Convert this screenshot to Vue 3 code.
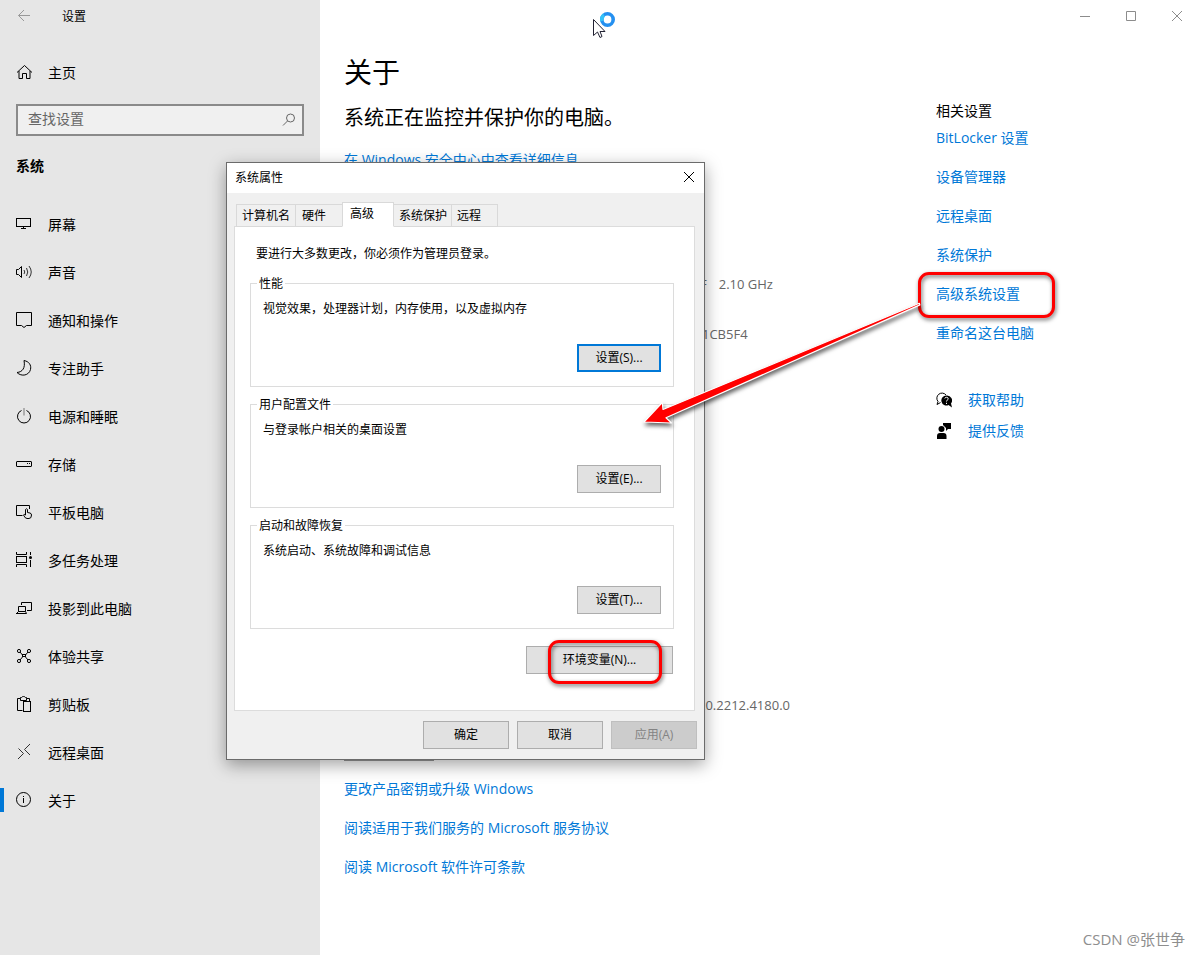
<script setup>
import { ref } from 'vue'

const query = ref('')

const navItems = [
  { id: 'display', label: '屏幕' },
  { id: 'sound', label: '声音' },
  { id: 'notify', label: '通知和操作' },
  { id: 'focus', label: '专注助手' },
  { id: 'power', label: '电源和睡眠' },
  { id: 'storage', label: '存储' },
  { id: 'tablet', label: '平板电脑' },
  { id: 'multitask', label: '多任务处理' },
  { id: 'project', label: '投影到此电脑' },
  { id: 'share', label: '体验共享' },
  { id: 'clipboard', label: '剪贴板' },
  { id: 'remote', label: '远程桌面' },
  { id: 'about', label: '关于' },
]

const tabs = [
  { label: '计算机名', cls: 'tab-name' },
  { label: '硬件', cls: 'tab-hardware' },
  { label: '高级', cls: 'tab-advanced' },
  { label: '系统保护', cls: 'tab-protect' },
  { label: '远程', cls: 'tab-remote' },
]
const activeTab = ref('高级')

const groups = [
  { title: '性能', text: '视觉效果，处理器计划，内存使用，以及虚拟内存', button: '设置(S)...', focused: true },
  { title: '用户配置文件', text: '与登录帐户相关的桌面设置', button: '设置(E)...', focused: false },
  { title: '启动和故障恢复', text: '系统启动、系统故障和调试信息', button: '设置(T)...', focused: false },
]

const related = ['BitLocker 设置', '设备管理器', '远程桌面', '系统保护', '高级系统设置', '重命名这台电脑']
const footerLinks = ['更改产品密钥或升级 Windows', '阅读适用于我们服务的 Microsoft 服务协议', '阅读 Microsoft 软件许可条款']
</script>

<template>
  <div class="page">
    <aside class="sidebar">
      <header class="side-title">
        <button class="back" type="button" aria-label="返回">
          <svg width="16" height="16" viewBox="0 0 16 16"><path d="M14 7.500H2.500M8 2L2.500 7.500L8 13" /></svg>
        </button>
        <span>设置</span>
      </header>
      <a class="home" href="#home">
        <svg class="icon" width="16" height="16" viewBox="0 0 16 16"><path d="M1 8.500L8.500 1.500L16 8.500M3 7V14.500H6.500V9.500H10.500V14.500H14V7" /></svg>
        <span>主页</span>
      </a>
      <label class="search">
        <input v-model="query" type="text" placeholder="查找设置" aria-label="查找设置" />
        <svg width="14" height="14" viewBox="0 0 14 14"><circle cx="8.500" cy="5" r="4" /><path d="M5.500 8L1 12.500" /></svg>
      </label>
      <h2 class="side-heading">系统</h2>
      <nav class="nav">
        <a
          v-for="item in navItems"
          :key="item.id"
          class="nav-item"
          :class="{ current: item.id === 'about' }"
          :href="'#' + item.id"
        >
          <svg class="icon" width="16" height="16" viewBox="0 0 16 16">
            <g v-if="item.id === 'display'" shape-rendering="crispEdges">
              <path d="M0.500 2.500H14.500V10.500H0.500ZM7.500 11V12.500M5 12.500H10" />
            </g>
            <g v-else-if="item.id === 'sound'">
              <path d="M0.500 5.500H2.500L5.500 2.500V13.500L2.500 10.500H0.500Z" />
              <path class="thin" d="M8 6Q9.500 8 8 10M10.500 4Q13 8 10.500 12M13 2Q17.500 8 13 14" />
            </g>
            <path v-else-if="item.id === 'notify'" d="M0.500 0.500H15.500V13.500H10.500L8 15.500L5.500 13.500H0.500Z" />
            <path v-else-if="item.id === 'focus'" d="M8 0.500C13 1.500 15.500 5 14.500 9.500C13 15.500 5.500 17 1 12.500C6.500 12 9.500 8 8 0.500Z" />
            <g v-else-if="item.id === 'power'">
              <path d="M5.500 2.500A6.500 6.500 0 1 0 10.500 2.500" /><path class="muted" d="M8 0V7.500" />
            </g>
            <g v-else-if="item.id === 'storage'">
              <rect x="0.500" y="5.500" width="15" height="5" rx="0.500" /><path d="M11 7.500H12M13 7.500H14" />
            </g>
            <g v-else-if="item.id === 'tablet'">
              <path d="M6.500 11.500H0.500V1.500H13.500V5" />
              <path d="M9.500 11V5.500Q10.500 4 11.500 5.500V8.500L14 9Q15.500 9.500 15.500 11Q15.500 14.500 13 14.500H11Q9 14.500 7.500 11Q8 9.500 9.500 11" />
            </g>
            <g v-else-if="item.id === 'multitask'">
              <path d="M0.500 0V2.500H10.500V0M0.500 15V12.500H10.500V15M14.500 0V3M14.500 8V15" />
              <rect x="0.500" y="4.500" width="10" height="6" /><circle class="solid" cx="14.500" cy="5.500" r="1.500" />
            </g>
            <g v-else-if="item.id === 'project'">
              <path d="M5.500 5V2.500H15.500V10.500H11" /><path d="M2.500 6.500H9.500V11.500H2.500ZM0 13.500H10.500M2.500 11.500L0.500 13.500M9.500 11.500L10.500 13.500" />
            </g>
            <g v-else-if="item.id === 'share'">
              <circle cx="3" cy="3" r="1.600" /><circle cx="13" cy="3" r="1.600" /><circle cx="3" cy="13" r="1.600" /><circle cx="13" cy="13" r="1.600" />
              <path d="M4 4L6.500 7M12 4L9.500 7M4 12L6.500 9M12 12L9.500 9" /><rect x="6.500" y="6.500" width="3" height="2" />
            </g>
            <g v-else-if="item.id === 'clipboard'">
              <path d="M6.500 14.500H1.500V2.500H4.500V1.500H5.500Q6 0.500 7.500 0.500Q9 0.500 9.500 1.500H10.500V2.500H13.500V5M4.500 2.500V4.500H10.500V2.500" />
              <rect x="7.500" y="5.500" width="7" height="10" />
            </g>
            <path v-else-if="item.id === 'remote'" class="thin" d="M14 0L8.500 5.500L14 11M2.500 4.500L7.500 9.500L2 15" />
            <g v-else>
              <circle cx="7.500" cy="7.500" r="7" /><path d="M7.500 6V11M7.500 4V5" />
            </g>
          </svg>
          <span>{{ item.label }}</span>
        </a>
      </nav>
    </aside>

    <main class="main">
      <header class="window-bar">
        <button type="button" aria-label="最小化"><svg width="10" height="10" viewBox="0 0 10 10"><path d="M0 5.500H10" /></svg></button>
        <button type="button" aria-label="最大化"><svg width="10" height="10" viewBox="0 0 10 10"><path d="M0.500 0.500H9.500V9.500H0.500Z" /></svg></button>
        <button type="button" aria-label="关闭"><svg width="10" height="10" viewBox="0 0 10 10"><path d="M0 0L10 10M10 0L0 10" /></svg></button>
      </header>
      <div class="columns">
        <section class="about">
          <h1>关于</h1>
          <p class="status">系统正在监控并保护你的电脑。</p>
          <a class="link" href="#security">在 Windows 安全中心中查看详细信息</a>
          <div class="specs">
            <p class="processor"><span>F</span><span>2.10 GHz</span></p>
            <p>1CB5F4</p>
            <p class="experience">20.2212.4180.0</p>
          </div>
          <div class="copy-edge"></div>
          <div class="footer-links">
            <a v-for="text in footerLinks" :key="text" class="link" href="#terms">{{ text }}</a>
          </div>
        </section>
        <aside class="related">
          <h3>相关设置</h3>
          <div class="related-links">
            <a v-for="text in related" :key="text" class="link" href="#related">{{ text }}</a>
          </div>
          <a class="help link" href="#help">
            <svg width="16" height="16" viewBox="0 0 16 16">
              <path class="outline" d="M4.500 10.500L1 12.500L2 9.500A5 5 0 1 1 10 3" />
              <path class="solid" d="M10.500 3.500A5 5 0 1 0 12.500 13L16 15.500L15 11.500A5 5 0 0 0 10.500 3.500Z" />
              <path class="mark" d="M8.800 6.500Q9 5.300 10.500 5.300Q12.200 5.300 12.200 6.800Q12.200 7.700 11.200 8.200Q10.500 8.600 10.500 9.500M10.500 10.800V12" />
            </svg>
            <span>获取帮助</span>
          </a>
          <a class="help link" href="#feedback">
            <svg width="16" height="16" viewBox="0 0 16 16">
              <circle class="solid" cx="5.500" cy="6" r="3" />
              <path class="solid" d="M7 0H15V6H12L10 8V5L8 3L7 2ZM1 16V13Q1 10 4 10H7.500Q10.500 10 10.500 13V16Z" />
            </svg>
            <span>提供反馈</span>
          </a>
        </aside>
      </div>
    </main>

    <section class="dialog" role="dialog" aria-labelledby="dialog-title">
      <header class="dialog-bar">
        <h2 id="dialog-title">系统属性</h2>
        <button type="button" aria-label="关闭"><svg width="10" height="10" viewBox="0 0 10 10"><path d="M0 0L10 10M10 0L0 10" /></svg></button>
      </header>
      <div class="tabs" role="tablist">
        <button
          v-for="tab in tabs"
          :key="tab.label"
          type="button"
          role="tab"
          :class="[tab.cls, { active: activeTab === tab.label }]"
          :aria-selected="activeTab === tab.label"
          @click="activeTab = tab.label"
        >{{ tab.label }}</button>
      </div>
      <div class="pane">
        <p class="notice">要进行大多数更改，你必须作为管理员登录。</p>
        <div class="groups">
          <fieldset v-for="group in groups" :key="group.title">
            <legend>{{ group.title }}</legend>
            <p>{{ group.text }}</p>
            <button class="push" :class="{ focused: group.focused }" type="button">{{ group.button }}</button>
          </fieldset>
        </div>
        <div class="env">
          <button class="push" type="button">环境变量(N)...</button>
          <span class="env-mark"></span>
        </div>
      </div>
      <footer class="dialog-actions">
        <button class="push" type="button">确定</button>
        <button class="push" type="button">取消</button>
        <button class="push" type="button" disabled>应用(A)</button>
      </footer>
    </section>

    <span class="link-mark"></span>
    <svg class="arrow" width="300" height="150" viewBox="630 290 300 150">
      <path d="M644 422L662.300 402.500L663 409.500L919.300 303.300L919.900 304.900L666 417.700L671.500 423Z" />
    </svg>
    <svg class="cursor" width="28" height="32" viewBox="590 10 28 32">
      <circle cx="607.500" cy="19.500" r="5.700" />
      <path class="glint" d="M602 21A5.700 5.700 0 0 1 604 15" />
      <path class="pointer" d="M593.500 19.500V35.500L597.500 32L600 37.500L602 36.500L600 31.500H605Z" />
    </svg>
    <span class="watermark">CSDN @张世争</span>
  </div>
</template>

<style>
body {
  margin: 0;
  background: #fff;
}
</style>

<style scoped>
* {
  box-sizing: border-box;
}
.page {
  position: relative;
  display: flex;
  min-height: 100vh;
  overflow: hidden;
  color: #000;
  background: #fff;
  font: 14px/20px "Open Sans", "Noto Sans CJK SC", sans-serif;
}
h1, h2, h3, p {
  margin: 0;
  font-weight: 400;
}
a {
  color: inherit;
  text-decoration: none;
}
button {
  margin: 0;
  padding: 0;
  border: 0;
  background: none;
  color: inherit;
  font: inherit;
}
svg {
  flex: none;
  fill: none;
  stroke: currentColor;
}
.solid {
  fill: #000;
  stroke: none;
}
.thin {
  stroke: #333;
}
.muted {
  stroke: #777;
}

/* Sidebar */
.sidebar {
  flex: none;
  width: 320px;
  background: #e6e6e6;
}
.side-title {
  display: flex;
  align-items: center;
  height: 32px;
  padding-left: 16px;
  gap: 30px;
  font-size: 12px;
}
.side-title span,
.home span,
.nav-item span {
  padding-top: 2px;
}
.back {
  display: flex;
  width: 16px;
  color: #999;
}
.home {
  display: flex;
  align-items: center;
  height: 48px;
  margin-top: 16px;
  padding: 0 16px;
  gap: 16px;
}
.search {
  display: flex;
  align-items: center;
  height: 32px;
  margin: 8px 16px 0;
  padding: 0 6px 0 10px;
  border: 2px solid #8a8a8a;
  background: #f0f0f0;
  color: #666;
}
.search input {
  flex: 1;
  min-width: 0;
  height: 28px;
  padding: 0 0 4px;
  border: 0;
  outline: 0;
  background: transparent;
  font: inherit;
}
.search input::placeholder {
  color: #666;
  opacity: 1;
}
.side-heading {
  margin: 20px 16px 24px;
  font-size: 14px;
  font-weight: 700;
}
.nav-item {
  display: flex;
  align-items: center;
  height: 48px;
  padding-left: 16px;
  gap: 16px;
}
.current {
  background: linear-gradient(#0078d7, #0078d7) 0 12px / 4px 24px no-repeat;
}

/* Settings page */
.main {
  flex: 1;
  min-width: 0;
}
.window-bar {
  display: flex;
  justify-content: flex-end;
  height: 32px;
  color: #8c8c8c;
}
.window-bar button {
  display: flex;
  align-items: center;
  justify-content: center;
  width: 46px;
}
.columns {
  display: flex;
  padding-left: 24px;
}
.about {
  width: 592px;
  padding-top: 20px;
}
h1 {
  font-size: 28px;
  line-height: 40px;
}
.status {
  margin: 11px 0 17px;
  font-size: 20px;
  line-height: 30px;
}
.link {
  color: #0078d7;
}
.about > .link {
  display: block;
}
.specs {
  padding: 104px 0 45px 358px;
  color: #666;
  font-size: 13px;
}
.specs p {
  margin-bottom: 30px;
}
.specs .processor {
  display: flex;
  gap: 12px;
  margin-left: -2px;
}
.specs .experience {
  margin: 351px 0 0 -4px;
}
.copy-edge {
  width: 90px;
  height: 1px;
  background: #999;
}
.footer-links {
  display: grid;
  gap: 19px;
  margin-top: 18px;
}
.related {
  padding-top: 69px;
}
h3 {
  font-size: 14px;
}
.related-links {
  display: grid;
  gap: 19px;
  margin: 7px 0 47px;
}
.help {
  display: flex;
  align-items: center;
  gap: 16px;
  margin-bottom: 11px;
}
.outline {
  stroke: #000;
}
.mark {
  stroke: #fff;
}

/* Dialog */
.dialog {
  position: absolute;
  top: 162px;
  left: 226px;
  width: 479px;
  border: 1px solid #6b6b6b;
  background: #f0f0f0;
  box-shadow: 0 5px 16px rgba(0, 0, 0, 0.36);
  font-size: 12px;
  line-height: 16px;
}
.dialog-bar {
  display: flex;
  align-items: flex-start;
  height: 30px;
  padding-left: 8px;
  background: #fff;
}
.dialog-bar h2 {
  flex: 1;
  padding-top: 7px;
  font-size: 12px;
}
.dialog-bar button {
  display: flex;
  align-items: center;
  justify-content: center;
  width: 30px;
  height: 28px;
}
.tabs {
  display: flex;
  align-items: flex-end;
  height: 34px;
  margin-bottom: -1px;
  padding-left: 9px;
}
.tabs button {
  height: 23px;
  padding-left: 5px;
  border: 1px solid #d9d9d9;
  border-right: 0;
  text-align: left;
}
.tab-name {
  width: 59px;
}
.tab-hardware {
  width: 47px;
}
.tab-advanced {
  width: 52px;
}
.tab-protect {
  width: 57px;
}
.tab-remote {
  width: 47px;
}
.tabs .tab-hardware {
  padding-left: 6px;
}
.tabs .tab-protect {
  border-left: 0;
}
.tabs .tab-remote {
  border-right: 1px solid #d9d9d9;
}
.tabs .active {
  position: relative;
  height: 25px;
  padding: 0 0 2px 7px;
  border-right: 1px solid #d9d9d9;
  border-bottom-color: #fff;
  background: #fff;
}
.pane {
  margin: 0 9px 0 7px;
  padding: 19px 20px 36px 15px;
  border: 1px solid #dcdcdc;
  background: #fff;
}
.notice {
  padding-left: 6px;
}
.groups {
  display: grid;
  gap: 8px;
  margin-top: 12px;
}
fieldset {
  display: flex;
  flex-direction: column;
  justify-content: space-between;
  height: 113px;
  min-width: 0;
  margin: 0;
  padding: 9px 12px 14px;
  border: 1px solid #dcdcdc;
}
legend {
  margin-left: -6px;
  padding: 2px 2px 0;
}
.push {
  height: 28px;
  border: 1px solid #adadad;
  background: #e1e1e1;
}
fieldset .push {
  align-self: flex-end;
  width: 84px;
}
.push.focused {
  border: 2px solid #0078d7;
}
.push:disabled {
  border-color: #bfbfbf;
  background: #ccc;
  color: #838383;
}
.env {
  position: relative;
  display: flex;
  justify-content: flex-end;
  margin: 17px 1px 0 0;
}
.env .push {
  width: 147px;
}
.env-mark,
.link-mark {
  position: absolute;
  border: 3px solid #f00;
  border-radius: 11px;
  filter: drop-shadow(1px 2px 2px rgba(0, 0, 0, 0.6));
  pointer-events: none;
}
.env-mark {
  top: -6px;
  right: 11px;
  width: 114px;
  height: 44px;
}
.link-mark {
  top: 272px;
  left: 918px;
  width: 137px;
  height: 46px;
}
.dialog-actions {
  display: flex;
  justify-content: flex-end;
  gap: 8px;
  padding: 10px 7px;
}
.dialog-actions .push {
  width: 86px;
}

/* Annotations */
.arrow {
  position: absolute;
  top: 290px;
  left: 630px;
  fill: #f00;
  stroke: #fff;
  stroke-width: 1.2px;
  stroke-linejoin: round;
  filter: drop-shadow(1px 3px 2px rgba(0, 0, 0, 0.6));
  pointer-events: none;
}
.cursor {
  position: absolute;
  top: 10px;
  left: 590px;
  stroke: #2490f0;
  stroke-width: 3.6px;
}
.cursor .glint {
  stroke: #35c3f8;
}
.cursor .pointer {
  fill: #fff;
  stroke: #223;
  stroke-width: 1px;
}
.watermark {
  position: absolute;
  right: 15px;
  bottom: 6px;
  color: #8e8e8e;
  font-size: 15px;
}
</style>
